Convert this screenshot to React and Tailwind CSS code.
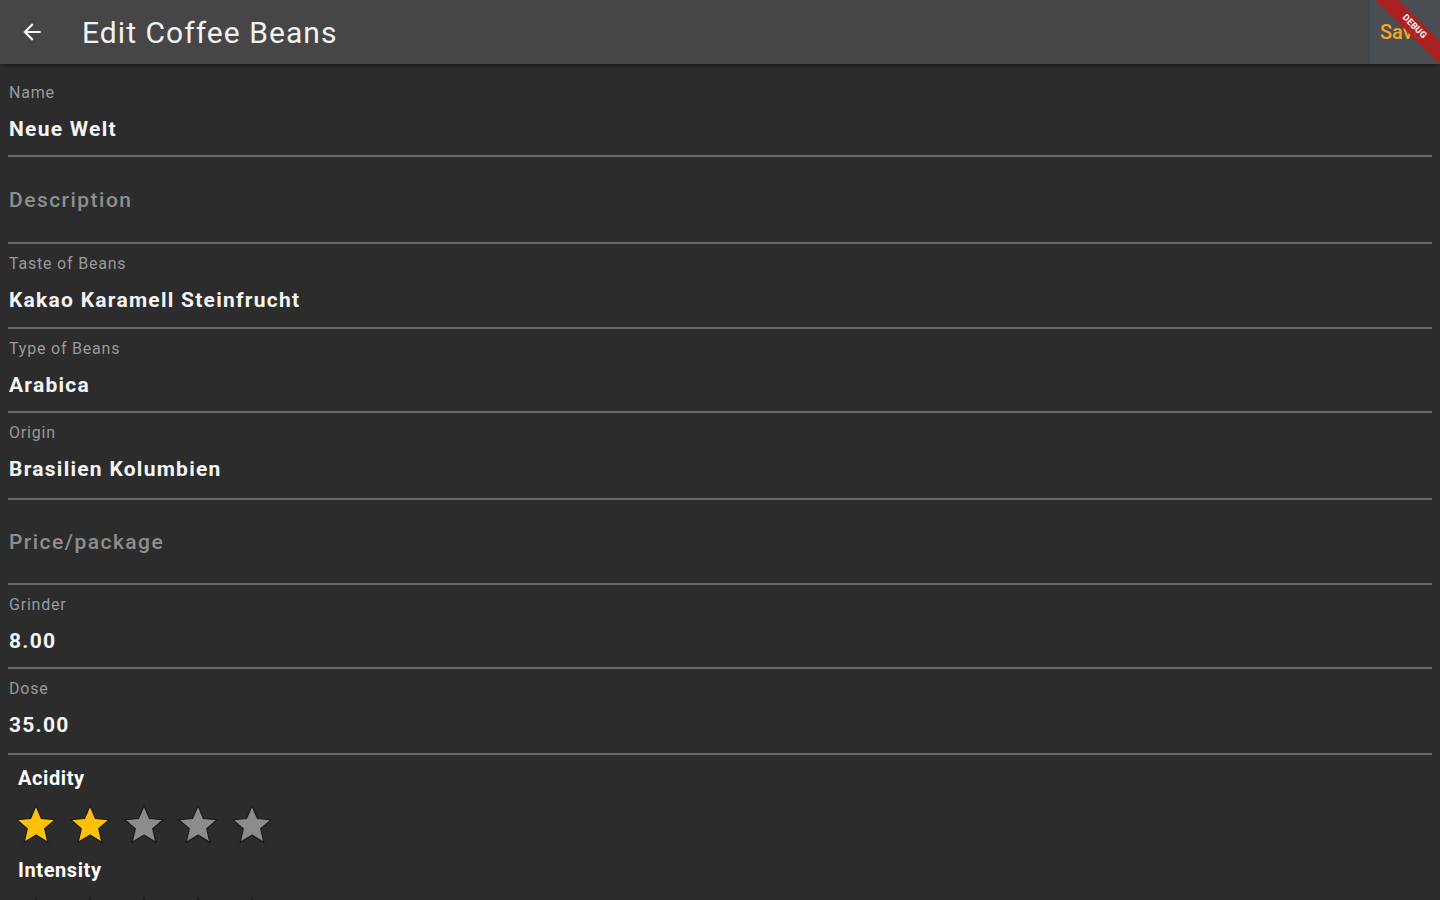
import React from 'react';

const fields = [
    { label: 'Name', value: 'Neue Welt', h: 'h-[84px]' },
    { label: 'Description', value: '', h: 'h-[87px]' },
    { label: 'Taste of Beans', value: 'Kakao Karamell Steinfrucht', h: 'h-[85px]' },
    { label: 'Type of Beans', value: 'Arabica', h: 'h-[84px]' },
    { label: 'Origin', value: 'Brasilien Kolumbien', h: 'h-[87px]' },
    { label: 'Price/package', value: '', h: 'h-[85px]' },
    { label: 'Grinder', value: '8.00', h: 'h-[84px]' },
    { label: 'Dose', value: '35.00', h: 'h-[86px]' },
];

const Star = ({ filled }) => (
    <svg viewBox="0 0 24 24" className="w-[46px] h-[46px]">
        <path
            d="M12 17.27L18.18 21l-1.64-7.03L22 9.24l-7.19-.61L12 2 9.19 8.63 2 9.24l5.46 4.73L5.82 21z"
            fill={filled ? '#ffc107' : '#8c8c8c'}
            stroke="#1a1a1a"
            strokeWidth="0.6"
        />
    </svg>
);

const Rating = ({ title, value }) => (
    <div>
        <div className="px-[18px] text-[20px] leading-[24px] font-bold tracking-[0.03em] text-white">{title}</div>
        <div className="flex gap-[8px] pl-[13px] mt-[12px]">
            {[1, 2, 3, 4, 5].map((i) => (
                <Star key={i} filled={i <= value} />
            ))}
        </div>
    </div>
);

const Field = ({ label, value, h }) => {
    if (!value) {
        return (
            <div className={`${h} mx-2 border-b-2 border-[#6a6a6a] flex items-center pl-[1px]`}>
                <span className="text-[21px] leading-[24px] font-medium tracking-[0.07em] text-[#8e8e8e]">{label}</span>
            </div>
        );
    }
    return (
        <div className={`${h} mx-2 border-b-2 border-[#6a6a6a] pl-[1px] pt-[11px]`}>
            <div className="text-[16px] leading-[18px] tracking-[0.05em] text-[#9a9a9a]">{label}</div>
            <div className="mt-[15px] text-[21px] leading-[24px] font-bold tracking-[0.06em] text-[#f4f4f4]">{value}</div>
        </div>
    );
};

export default function App() {
    return (
        <div className="h-screen overflow-hidden bg-[#2c2c2c] font-['Roboto',sans-serif] relative">
            <div className="h-16 bg-[#464646] flex items-center shadow-[0_2px_4px_rgba(0,0,0,0.35)] relative z-10">
                <svg viewBox="0 0 24 24" className="w-[26px] h-[26px] ml-[19px]">
                    <path d="M20 11H7.83l5.59-5.59L12 4l-8 8 8 8 1.41-1.41L7.83 13H20v-2z" fill="#f2f2f2" />
                </svg>
                <h1 className="ml-[37px] text-[30px] tracking-[0.035em] text-[#f2f2f2] font-normal">Edit Coffee Beans</h1>
                <div className="ml-auto h-full w-[70px] bg-[#4a4e53] flex items-center pl-[10px]">
                    <span className="text-[20px] font-medium text-[#f5a623]">Save</span>
                </div>
            </div>

            <div className="pt-[9px]">
                {fields.map((f) => (
                    <Field key={f.label} {...f} />
                ))}
                <div className="pt-[11px] flex flex-col gap-[10px]">
                    <Rating title="Acidity" value={2} />
                    <Rating title="Intensity" value={3} />
                </div>
            </div>

            {/* debug banner */}
            <div className="absolute top-0 right-0 w-[80px] h-[80px] overflow-hidden pointer-events-none z-20">
                <div className="absolute left-[-8px] top-[19px] w-[124px] h-[16px] bg-[#b71c1c]/90 rotate-45 flex items-center justify-center">
                    <span className="text-[9px] font-bold text-white tracking-wide">DEBUG</span>
                </div>
            </div>
        </div>
    );
}
